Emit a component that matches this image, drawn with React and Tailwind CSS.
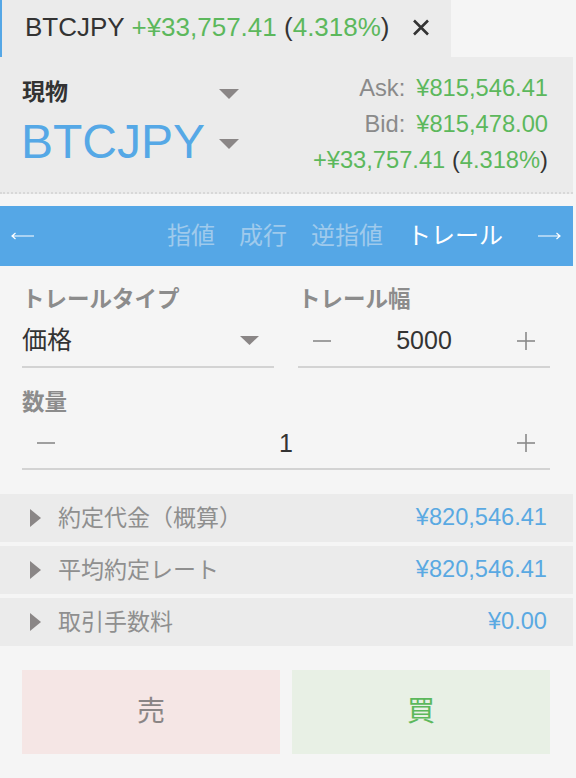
import React from "react";

const GREEN = "text-[#5cb85c]";

const Tri = ({ w = 20, h = 10, className = "" }) => (
  <svg width={w} height={h} viewBox={`0 0 ${w} ${h}`} className={className}>
    <polygon points={`0,0 ${w},0 ${w / 2},${h}`} fill="#8a8686" />
  </svg>
);

const RightTri = () => (
  <svg width="11" height="18" viewBox="0 0 11 18">
    <polygon points="0,0 11,9 0,18" fill="#8a8686" />
  </svg>
);

const Minus = () => (
  <svg width="18" height="18" viewBox="0 0 18 18">
    <line x1="0" y1="9" x2="18" y2="9" stroke="#8a8a8a" strokeWidth="1.6" />
  </svg>
);

const Plus = () => (
  <svg width="18" height="18" viewBox="0 0 18 18">
    <line x1="0" y1="9" x2="18" y2="9" stroke="#8a8a8a" strokeWidth="1.6" />
    <line x1="9" y1="0" x2="9" y2="18" stroke="#8a8a8a" strokeWidth="1.6" />
  </svg>
);

const Arrow = ({ left }) => (
  <svg width="23" height="10" viewBox="0 0 23 10">
    {left ? (
      <path d="M23 5H1 M4.5 2L1 5L4.5 8" stroke="#fff" strokeWidth="1.2" fill="none" />
    ) : (
      <path d="M0 5H22 M18.5 2L22 5L18.5 8" stroke="#fff" strokeWidth="1.2" fill="none" />
    )}
  </svg>
);

const summary = [
  { label: "約定代金（概算）", value: "¥820,546.41" },
  { label: "平均約定レート", value: "¥820,546.41" },
  { label: "取引手数料", value: "¥0.00" },
];

export default function App() {
  return (
    <div className="w-[576px] h-[778px] overflow-hidden bg-[#f5f5f5] font-['Liberation_Sans','Noto_Sans_CJK_JP',sans-serif]">
      {/* tab strip */}
      <div className="flex h-[57px]">
        <div className="flex items-center w-[451px] h-full border-l-2 border-[#55a7e6] bg-[#ebebeb] pl-[23px] pb-[4px]">
          <span className="text-[26px] leading-none whitespace-nowrap">
            <span className="text-[#333]">BTCJPY</span>{" "}
            <span className={GREEN}>+¥33,757.41</span>{" "}
            <span className="text-[#333]">(</span>
            <span className={GREEN}>4.318%</span>
            <span className="text-[#333]">)</span>
          </span>
          <svg width="18" height="17" viewBox="0 0 18 17" className="ml-[22px] mt-[2px]">
            <path d="M2 1.5L16 15.5M16 1.5L2 15.5" stroke="#333" strokeWidth="2.6" />
          </svg>
        </div>
      </div>

      {/* instrument header */}
      <div className="flex justify-between w-[573px] h-[137px] pt-[13px] bg-[#ebebeb] border-b-2 border-dotted border-[#d8d8d8]">
        <div className="flex flex-col w-[239px] pl-[22px]">
          <div className="flex items-center justify-between h-[45px]">
            <span className="text-[23px] font-bold text-[#333] leading-none">現物</span>
            <Tri className="mt-[3px]" />
          </div>
          <div className="flex items-center justify-between h-[54px]">
            <span className="text-[48px] text-[#55a8e6] leading-none -ml-[1px]">BTCJPY</span>
            <Tri className="mt-[4px]" />
          </div>
        </div>
        <div className="flex flex-col items-end pr-[25px] text-[23.7px] leading-[36px] whitespace-nowrap">
          <div>
            <span className="text-[#8a8a8a]">Ask:</span>
            <span className={`${GREEN} ml-[11px]`}>¥815,546.41</span>
          </div>
          <div>
            <span className="text-[#8a8a8a]">Bid:</span>
            <span className={`${GREEN} ml-[11px]`}>¥815,478.00</span>
          </div>
          <div>
            <span className={GREEN}>+¥33,757.41</span>{" "}
            <span className="text-[#333]">(</span>
            <span className={GREEN}>4.318%</span>
            <span className="text-[#333]">)</span>
          </div>
        </div>
      </div>

      {/* order type nav */}
      <div className="flex items-center w-[573px] h-[60px] mt-[12px] bg-[#55a7e6] pl-[11px] pr-[12px]">
        <Arrow left />
        <div className="flex-1" />
        <div className="flex gap-[24px] text-[24px] leading-none">
          <span className="text-[#9fcaec]">指値</span>
          <span className="text-[#9fcaec]">成行</span>
          <span className="text-[#9fcaec]">逆指値</span>
          <span className="text-white">トレール</span>
        </div>
        <div className="ml-[35px]">
          <Arrow />
        </div>
      </div>

      {/* form */}
      <div className="w-[573px] pl-[22px] pr-[23px] pt-[19px]">
        <div className="grid grid-cols-2 gap-x-[24px]">
          <div>
            <div className="h-[30px] leading-[30px] text-[22.5px] font-bold text-[#8c8c8c]">トレールタイプ</div>
            <div className="flex items-center justify-between h-[53px] border-b-2 border-[#d3d3d3] pr-[15px]">
              <span className="text-[25px] text-[#333] leading-none">価格</span>
              <Tri w={19} h={9} />
            </div>
          </div>
          <div>
            <div className="h-[30px] leading-[30px] text-[22.5px] font-bold text-[#8c8c8c]">トレール幅</div>
            <div className="flex items-center justify-between h-[53px] border-b-2 border-[#d3d3d3] px-[15px]">
              <Minus />
              <span className="text-[25px] text-[#333] leading-none">5000</span>
              <Plus />
            </div>
          </div>
        </div>

        <div className="mt-[20px] h-[30px] leading-[30px] text-[22.5px] font-bold text-[#8c8c8c]">数量</div>
        <div className="flex items-center justify-between h-[52px] border-b-2 border-[#d3d3d3] px-[15px]">
          <Minus />
          <span className="text-[25px] text-[#333] leading-none">1</span>
          <Plus />
        </div>
      </div>

      {/* summary rows */}
      <div className="flex flex-col gap-[4px] mt-[24px] w-[573px]">
        {summary.map((row) => (
          <div key={row.label} className="flex items-center h-[48px] bg-[#ebebeb] pl-[30px] pr-[26px]">
            <RightTri />
            <span className="ml-[17px] text-[23px] text-[#8f8f8f] leading-none">{row.label}</span>
            <span className="ml-auto text-[23.6px] text-[#5aa9e2] leading-none">{row.value}</span>
          </div>
        ))}
      </div>

      {/* buttons */}
      <div className="grid grid-cols-2 gap-[12px] mt-[24px] w-[573px] pl-[22px] pr-[23px]">
        <button className="h-[84px] bg-[#f5e6e5] text-[28px] text-[#8a8585] leading-none">売</button>
        <button className="h-[84px] bg-[#e8f0e5] text-[28px] text-[#5cb85c] leading-none">買</button>
      </div>
    </div>
  );
}
